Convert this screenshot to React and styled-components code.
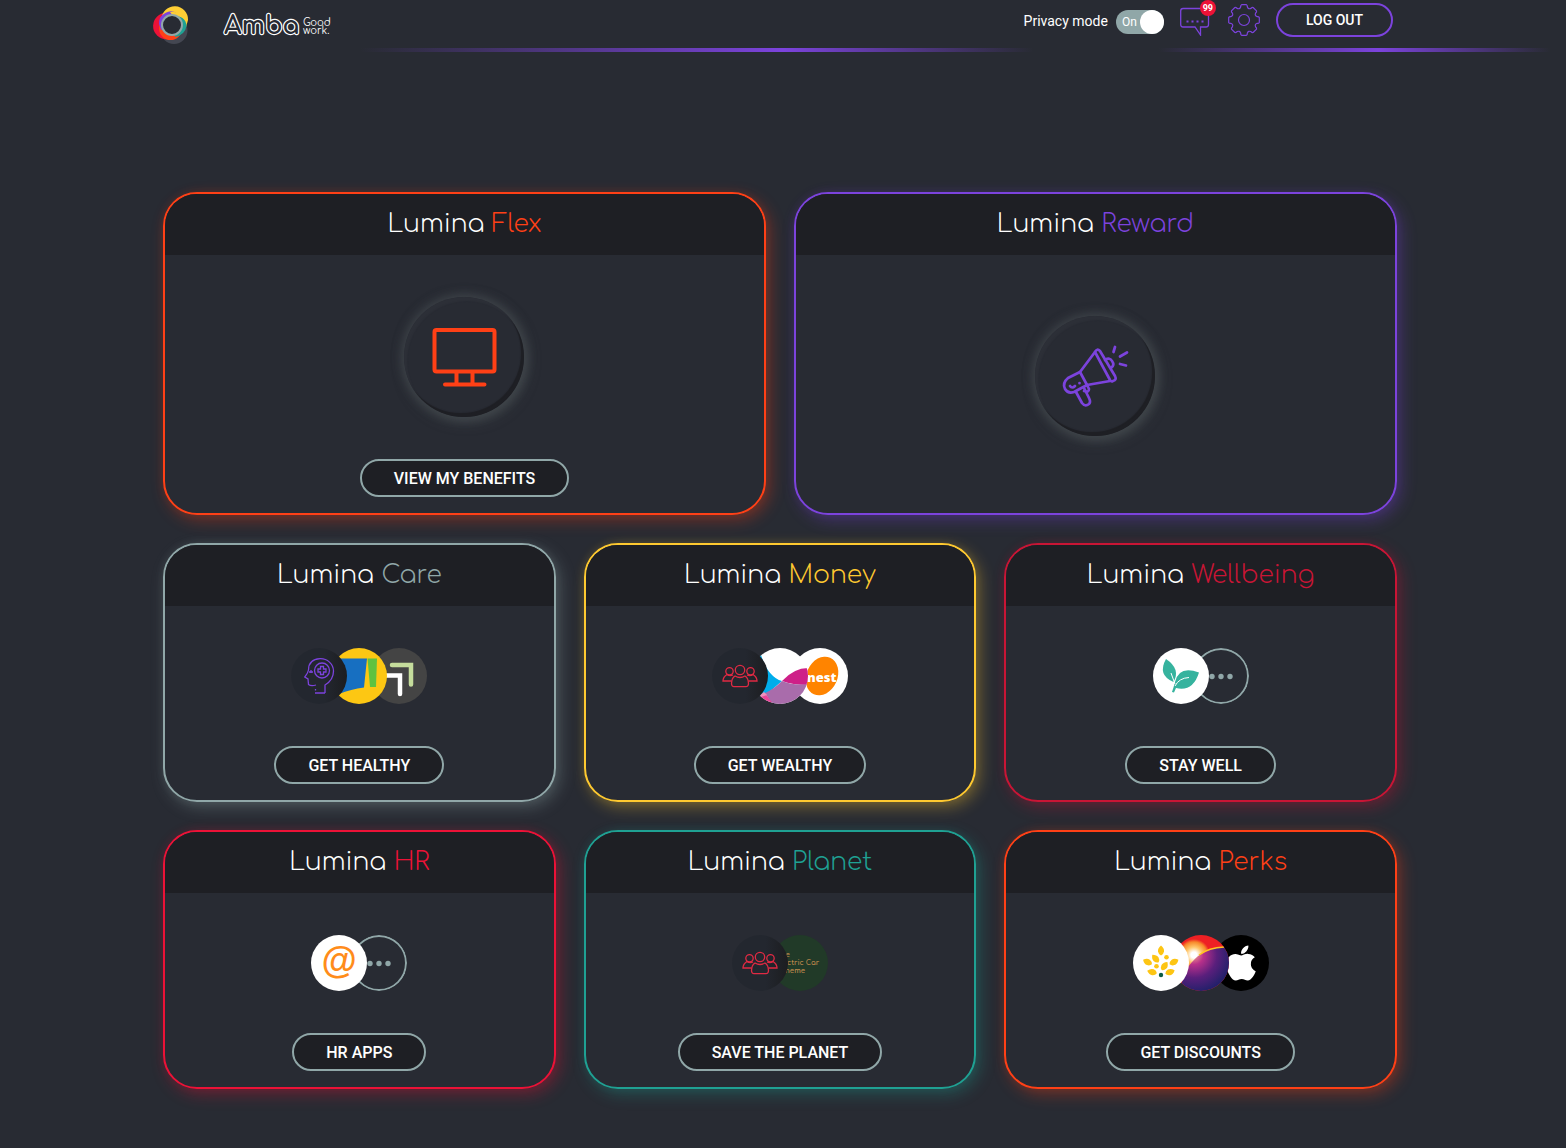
import React from "react";
import styled, { createGlobalStyle } from "styled-components";
import { FaApple } from "react-icons/fa";

const COLORS = {
  page: "#282b33",
  dark: "#1e1f24",
  grey: "#90a7a8",
  orange: "#ff4016",
  purple: "#7c43dd",
  yellow: "#fec930",
  red: "#ec1237",
  crimson: "#c91535",
  teal: "#1fa193"
};

const GlobalStyle = createGlobalStyle`
  * {
    box-sizing: border-box;
  }
  body {
    margin: 0;
    background: ${COLORS.page};
    color: #fff;
    font-family: Roboto, sans-serif;
  }
`;

const Header = styled.header`
  padding: 0 20px 0 0;
  height: 52px;
  background: linear-gradient(
      90deg,
      transparent 23%,
      ${COLORS.purple} 50%,
      transparent 66%,
      transparent 74%,
      ${COLORS.purple} 88%,
      transparent 99%
    )
    bottom / 100% 4px no-repeat;
`;

const HeaderInner = styled.div`
  display: flex;
  align-items: flex-start;
  justify-content: space-between;
  max-width: 1240px;
  margin: 0 auto;
`;

const Brand = styled.a`
  display: flex;
  gap: 28px;
  padding-top: 6px;
  color: #fff;
  text-decoration: none;

  svg {
    display: block;
  }
`;

const Wordmark = styled.svg`
  overflow: visible;
  font-family: Comfortaa, Lato, sans-serif;
`;

const Tools = styled.div`
  display: flex;
  align-items: center;
  height: 40px;
`;

const PrivacyToggle = styled.label`
  display: flex;
  align-items: center;
  gap: 8px;
  margin: 2px 16px 0 0;
  font-size: 14px;
`;

const Switch = styled.input`
  appearance: none;
  display: flex;
  align-items: center;
  justify-content: space-between;
  width: 48px;
  height: 24px;
  margin: 2px 0 0;
  border-radius: 12px;
  background: ${COLORS.grey};
  font: 12px Roboto, sans-serif;
  color: #fff;

  &::before {
    content: "On";
    padding-left: 6px;
  }
  &::after {
    content: "";
    width: 24px;
    height: 24px;
    border-radius: 50%;
    background: #fff;
  }
`;

const IconButton = styled.button`
  position: relative;
  display: block;
  width: 32px;
  height: 32px;
  margin-right: 16px;
  padding: 0;
  border: 0;
  background: none;
  color: ${COLORS.purple};
`;

const Badge = styled.span`
  position: absolute;
  top: -4px;
  right: -4px;
  width: 16px;
  border-radius: 8px;
  background: ${COLORS.red};
  color: #fff;
  font: bold 9px/16px Roboto, sans-serif;
  text-align: center;
`;

const Pill = styled.button`
  height: 38px;
  padding: 0 32px;
  border: 2px solid ${COLORS.grey};
  border-radius: 19px;
  background: ${COLORS.dark};
  color: #fff;
  font: 500 16px Roboto, sans-serif;
`;

const LogoutButton = styled(Pill)`
  height: 34px;
  padding: 0 28px;
  border-color: ${COLORS.purple};
  background: none;
  font-size: 14px;
`;

const Main = styled.main`
  padding: 140px 6px 60px 0;
`;

const Grid = styled.div`
  display: grid;
  grid-template-columns: repeat(6, 1fr);
  gap: 28px;
  max-width: 1234px;
  margin: 0 auto;
`;

const Card = styled.section`
  display: flex;
  flex-direction: column;
  grid-column: span ${p => (p.$large ? 3 : 2)};
  overflow: hidden;
  border: 2px solid ${p => p.$color};
  border-radius: 34px;
  box-shadow: 0 0 10px ${p => p.$color}18, 4px 5px 16px ${p => p.$color}55;
`;

const CardTitle = styled.h2`
  margin: 0;
  padding-bottom: 1px;
  background: ${COLORS.dark};
  font: 300 25px/60px Comfortaa, Lato, sans-serif;
  text-align: center;

  span {
    color: ${p => p.$color};
  }
`;

const CardBody = styled.div`
  display: flex;
  flex-direction: column;
  align-items: center;
  min-height: ${p => (p.$large ? 258 : 194)}px;
  padding-bottom: 16px;
`;

const Visual = styled.div`
  display: flex;
  flex: 1;
  align-items: center;
`;

const Dial = styled.div`
  width: 120px;
  height: 120px;
  border-radius: 50%;
  box-shadow: inset -3px -4px 1px ${COLORS.dark}, inset 3px 4px 1px #2c2f37,
    0 -1px 12px #3c4147, 2px 3px 14px #4a5154;
`;

const AppCircle = styled.svg`
  position: relative;
  z-index: ${p => p.$order};
  width: 56px;
  height: 56px;
  border-radius: 50%;
  background: ${p => p.$bg || "none"};

  & + & {
    margin-left: -16px;
  }
`;

const DARK_CIRCLE = "linear-gradient(90deg, #23272f 60%, #1c1d20)";

const gearPath = () => {
  const at = (r, deg) => {
    const a = ((deg - 90) * Math.PI) / 180;
    return `${(16 + r * Math.cos(a)).toFixed(2)} ${(16 + r * Math.sin(a)).toFixed(2)}`;
  };
  let d = `M${at(15.5, -9)}`;
  for (let i = 0; i < 8; i++) {
    const t = i * 45;
    d += `L${at(15.5, t + 9)}Q${at(15.2, t + 13)} ${at(13.6, t + 14)}`;
    d += `Q${at(11.2, t + 22.5)} ${at(13.6, t + 31)}`;
    d += `Q${at(15.2, t + 32)} ${at(15.5, t + 36)}`;
  }
  return d + "Z";
};

const SwirlLogo = () => (
  <svg width="38" height="38" viewBox="0 0 38 38">
    <circle cx="21" cy="24.500" r="13.500" fill="#444752" />
    <circle cx="13.300" cy="20" r="13.200" fill={COLORS.red} />
    <path d="M8.500 13A13.200 13.200 0 0 1 35 14L33 21H12Z" fill="#fece35" />
    <circle cx="17.500" cy="22.500" r="11.500" fill={COLORS.orange} />
    <path d="M6 18A11.800 11.800 0 0 1 25 8L19 20L8 24Z" fill={COLORS.purple} />
    <path d="M20 8.500Q33 10 33.500 20Q32 29 22 31Z" fill={COLORS.teal} />
    <path d="M17 6Q28 4 34.500 17Q30 9 20 10Z" fill="#fece35" />
    <circle cx="19" cy="19" r="10" fill={COLORS.page} stroke={COLORS.grey} strokeWidth="2" />
  </svg>
);

const AmbaLogo = () => (
  <Wordmark width="112" height="40" viewBox="-4 0 112 40">
    <text
      x="1"
      y="28"
      fontSize="25"
      fontWeight="700"
      fill={COLORS.page}
      stroke="#fff"
      strokeWidth="2.400"
      strokeLinejoin="round"
      paintOrder="stroke"
    >
      Amba
    </text>
    <text x="80" y="20" fontSize="10" fill="#fff">Good</text>
    <text x="80" y="28" fontSize="10" fill="#fff">work.</text>
  </Wordmark>
);

const ChatIcon = () => (
  <svg width="32" height="32" viewBox="0 0 32 32" fill="none" stroke="currentColor" strokeWidth="1.300">
    <path d="M3 4.500H26Q28.500 4.500 28.500 7V20.500Q28.500 23 26 23H20.500V31L15 23H3Q.7 23 .7 20.500V7Q.7 4.500 3 4.500Z" />
    <path d="M6.500 17.500H24" strokeWidth="2" strokeDasharray="2 3" />
  </svg>
);

const GearIcon = () => (
  <svg width="32" height="32" viewBox="0 0 32 32" fill="none" stroke="currentColor" strokeWidth="1.200">
    <path d={gearPath()} strokeLinejoin="round" />
    <circle cx="16" cy="16" r="5.500" />
  </svg>
);

const MonitorIcon = () => (
  <svg viewBox="0 0 120 120" fill="none" stroke={COLORS.orange} strokeWidth="4" strokeLinecap="round">
    <rect x="30.500" y="33" width="60" height="41.500" rx="2" />
    <path d="M52.500 75V86M68.500 75V86M41 87.500H80.500" />
  </svg>
);

const MegaphoneIcon = () => (
  <svg viewBox="0 0 120 120" fill="none" stroke={COLORS.purple} strokeWidth="2.700" strokeLinecap="round" strokeLinejoin="round">
    <path d="M60 36L45 56L33 62Q27 67 30 73Q33 78 39 76L52 69L75 65" />
    <path d="M45 56L52 69" />
    <path d="M60 36Q62 32 65 35L80 60Q82 64 78 65Q76 66 75 64Z" />
    <path d="M70 44Q75 41 77 45Q80 49 76 52" />
    <path d="M41 76L47 87Q50 91 54 88Q56 86 54 82L49 72M49 75Q54 77 54 73L52 69" />
    <path d="M35 70Q37 73 40 70M44.500 67V67.200" />
    <path d="M78.500 36L80 31M85 40.500L92 36.500M85 48L91 49.500" />
  </svg>
);

const HeadIcon = ({ order }) => (
  <AppCircle $order={order} $bg={DARK_CIRCLE} viewBox="0 0 56 56" fill="none" stroke={COLORS.purple} strokeWidth="1.300">
    <path d="M34 45V37Q42.500 32 42.500 23A13 12.500 0 0 0 29 10.700Q17.500 11.500 17.500 22Q17 25 13.800 29L17 31L17.500 36.500Q20 38.500 25 37M24.500 41V42.500M24 45H34M18 24H22M20 22V25" />
    <circle cx="31" cy="22.500" r="7.500" />
    <path d="M29.500 18.500H32.500V21H35V24H32.500V26.500H29.500V24H27V21H29.500Z" />
  </AppCircle>
);

const BlueGreenIcon = ({ order }) => (
  <AppCircle $order={order} $bg="#fdc713" viewBox="0 0 56 56">
    <path d="M4 10.500H36L33 39.500Q20 41 8 46Z" fill="#176fc1" />
    <path d="M36.500 10.500H46L45 39H39Z" fill="#5fc240" />
  </AppCircle>
);

const CornersIcon = ({ order }) => (
  <AppCircle $order={order} $bg="#444" viewBox="0 0 56 56" fill="none" strokeWidth="4.500" strokeLinecap="round">
    <path d="M21 17H40V36.500" stroke="#c5dd9c" />
    <path d="M12 27.500H29V46" stroke="#fff" />
  </AppCircle>
);

const PeopleIcon = ({ order }) => (
  <AppCircle $order={order} $bg={DARK_CIRCLE} viewBox="0 0 56 56" fill="none" stroke="#e02a43" strokeWidth="1.300">
    <circle cx="28" cy="22" r="4.700" />
    <path d="M23 28Q28 31 33 28Q36.500 30 36.500 36Q36 38.700 34 38.700H22Q20 38.700 19.500 36Q19.500 30 23 28Z" />
    <circle cx="17.500" cy="23.300" r="3.700" />
    <circle cx="38.500" cy="23.300" r="3.700" />
    <path d="M19.500 33H11Q11 29 15 26.500Q18 28.500 21 27M36.500 33H45Q45 29 41 26.500Q38 28.500 35 27" />
  </AppCircle>
);

const RibbonIcon = ({ order }) => (
  <AppCircle $order={order} $bg="#fff" viewBox="0 0 56 56">
    <path d="M4 7H9Q16 29 30 33L15 46L4 50Z" fill="#00adeb" />
    <path d="M30 33Q42 20 56 20V37Q40 37 30 33Z" fill="#ce2088" />
    <path d="M30 33Q42 38 56 36V56H20L13 45Q22 41 30 33Z" fill="#a96cab" />
    <path d="M4 52L13 45L21 56Z" fill="#e9459a" />
    <path d="M4 50L12 44L15 47L9 49Z" fill="#f091bb" />
  </AppCircle>
);

const NestIcon = ({ order }) => (
  <AppCircle $order={order} $bg="#fff" viewBox="0 0 56 56">
    <ellipse cx="30" cy="28" rx="15.500" ry="20" transform="rotate(24 30 28)" fill="#ff8400" />
    <text x="15" y="34" fill="#fff" fontFamily="Open Sans, sans-serif" fontSize="13" fontWeight="800">nest</text>
  </AppCircle>
);

const LeafIcon = ({ order }) => (
  <AppCircle $order={order} $bg="#fff" viewBox="0 0 56 56">
    <path d="M13 11Q4 27 20.500 34Q28 21 13 11Z" fill="#36b39e" />
    <path d="M46 24.500Q26 17 22 34Q21 38 19 44L21 44.500L23 40Q40 44 46 24.500Z" fill="#36b39e" />
    <path d="M22 38Q26 30 36 29.500M22 36L18 25" fill="none" stroke="#fff" />
  </AppCircle>
);

const MoreIcon = ({ order }) => (
  <AppCircle $order={order} viewBox="0 0 56 56" fill={COLORS.grey}>
    <circle cx="28" cy="28" r="27" fill="none" stroke={COLORS.grey} strokeWidth="2" />
    <circle cx="19" cy="28.500" r="2.700" />
    <circle cx="28" cy="28.500" r="2.700" />
    <circle cx="37" cy="28.500" r="2.700" />
  </AppCircle>
);

const AtIcon = ({ order }) => (
  <AppCircle $order={order} $bg="#fff" viewBox="0 0 56 56">
    <text x="10" y="38" fill="#ff8c1a" fontFamily="Liberation Sans, sans-serif" fontSize="36" fontWeight="700" fontStyle="italic">@</text>
  </AppCircle>
);

const ElectricCarIcon = ({ order }) => (
  <AppCircle $order={order} $bg="#213a28" viewBox="0 0 56 56" fill="#c08a4e" fontFamily="Comfortaa, Lato, sans-serif" fontSize="7" fontWeight="700">
    <text x="4" y="22">The</text>
    <text x="4" y="30">Electric Car</text>
    <text x="4" y="38">Scheme</text>
  </AppCircle>
);

const PETALS = [
  [28, 15.5, 0],
  [22.5, 23.5, -40],
  [14.5, 27, -62],
  [41, 27, 62],
  [31.5, 31, 35],
  [19, 37, -75],
  [37, 37, 68]
];

const TreeIcon = ({ order }) => (
  <AppCircle $order={order} $bg="#fff" viewBox="0 0 56 56" fill="#fdc513">
    {PETALS.map(([x, y, turn]) => (
      <path
        key={`${x}-${y}`}
        d="M0 -5Q3.500 -2 3 1Q2.500 4 0 5Q-2.500 4 -3 1Q-3.500 -2 0 -5Z"
        transform={`translate(${x} ${y}) rotate(${turn})`}
      />
    ))}
    <circle cx="33.500" cy="22.300" r="2.300" />
    <circle cx="23.500" cy="31.300" r="2.300" />
    <circle cx="28" cy="40" r="2.200" fill="#0c5c44" />
  </AppCircle>
);

const PlanetIcon = ({ order }) => (
  <AppCircle $order={order} viewBox="0 0 56 56">
    <defs>
      <radialGradient id="sun" gradientUnits="userSpaceOnUse" cx="21" cy="20" r="20">
        <stop offset="0.150" stopColor="#fff" />
        <stop offset="0.400" stopColor="#ffc66a" />
        <stop offset="0.650" stopColor="#f7892b" />
        <stop offset="0.800" stopColor="#ee2024" />
      </radialGradient>
      <radialGradient id="planet" gradientUnits="userSpaceOnUse" cx="21" cy="20" r="38">
        <stop offset="0" stopColor="#f2a08a" />
        <stop offset="0.250" stopColor="#b8308a" />
        <stop offset="0.600" stopColor="#5a1f7c" />
        <stop offset="1" stopColor="#21206a" />
      </radialGradient>
    </defs>
    <rect width="56" height="56" fill="url(#sun)" />
    <circle cx="52" cy="56" r="44" fill="url(#planet)" />
    <path d="M26 20Q36 12.500 51 12" fill="none" stroke="#ffc321" strokeWidth="1.500" />
  </AppCircle>
);

const AppleIcon = ({ order }) => (
  <AppCircle $order={order} $bg="#000" viewBox="0 0 56 56">
    <svg x="8" y="8" width="40" height="40">
      <FaApple size={40} color="#fff" />
    </svg>
  </AppCircle>
);

const CARDS = [
  { name: "Flex", color: COLORS.orange, large: true, Picture: MonitorIcon, action: "VIEW MY BENEFITS" },
  { name: "Reward", color: COLORS.purple, large: true, Picture: MegaphoneIcon },
  { name: "Care", color: COLORS.grey, apps: [HeadIcon, BlueGreenIcon, CornersIcon], action: "GET HEALTHY" },
  { name: "Money", color: COLORS.yellow, apps: [PeopleIcon, RibbonIcon, NestIcon], action: "GET WEALTHY" },
  { name: "Wellbeing", color: COLORS.crimson, apps: [LeafIcon, MoreIcon], action: "STAY WELL" },
  { name: "HR", color: COLORS.red, apps: [AtIcon, MoreIcon], action: "HR APPS" },
  { name: "Planet", color: COLORS.teal, apps: [PeopleIcon, ElectricCarIcon], action: "SAVE THE PLANET" },
  { name: "Perks", color: COLORS.orange, apps: [TreeIcon, PlanetIcon, AppleIcon], action: "GET DISCOUNTS" }
];

const LuminaCard = ({ name, color, large, Picture, apps = [], action }) => (
  <Card $color={color} $large={large}>
    <CardTitle $color={color}>
      Lumina <span>{name}</span>
    </CardTitle>
    <CardBody $large={large}>
      <Visual>
        {Picture && (
          <Dial>
            <Picture />
          </Dial>
        )}
        {apps.map((AppIcon, i) => (
          <AppIcon key={i} order={apps.length - i} />
        ))}
      </Visual>
      {action && <Pill type="button">{action}</Pill>}
    </CardBody>
  </Card>
);

const App = () => (
  <>
    <GlobalStyle />
    <Header>
      <HeaderInner>
        <Brand href="#home" aria-label="Home">
          <SwirlLogo />
          <AmbaLogo />
        </Brand>
        <Tools>
          <PrivacyToggle htmlFor="privacy">
            Privacy mode
            <Switch id="privacy" type="checkbox" defaultChecked />
          </PrivacyToggle>
          <IconButton type="button" aria-label="Messages">
            <ChatIcon />
            <Badge>99</Badge>
          </IconButton>
          <IconButton type="button" aria-label="Settings">
            <GearIcon />
          </IconButton>
          <LogoutButton type="button">LOG OUT</LogoutButton>
        </Tools>
      </HeaderInner>
    </Header>
    <Main>
      <Grid>
        {CARDS.map(card => (
          <LuminaCard key={card.name} {...card} />
        ))}
      </Grid>
    </Main>
  </>
);

export default App;
